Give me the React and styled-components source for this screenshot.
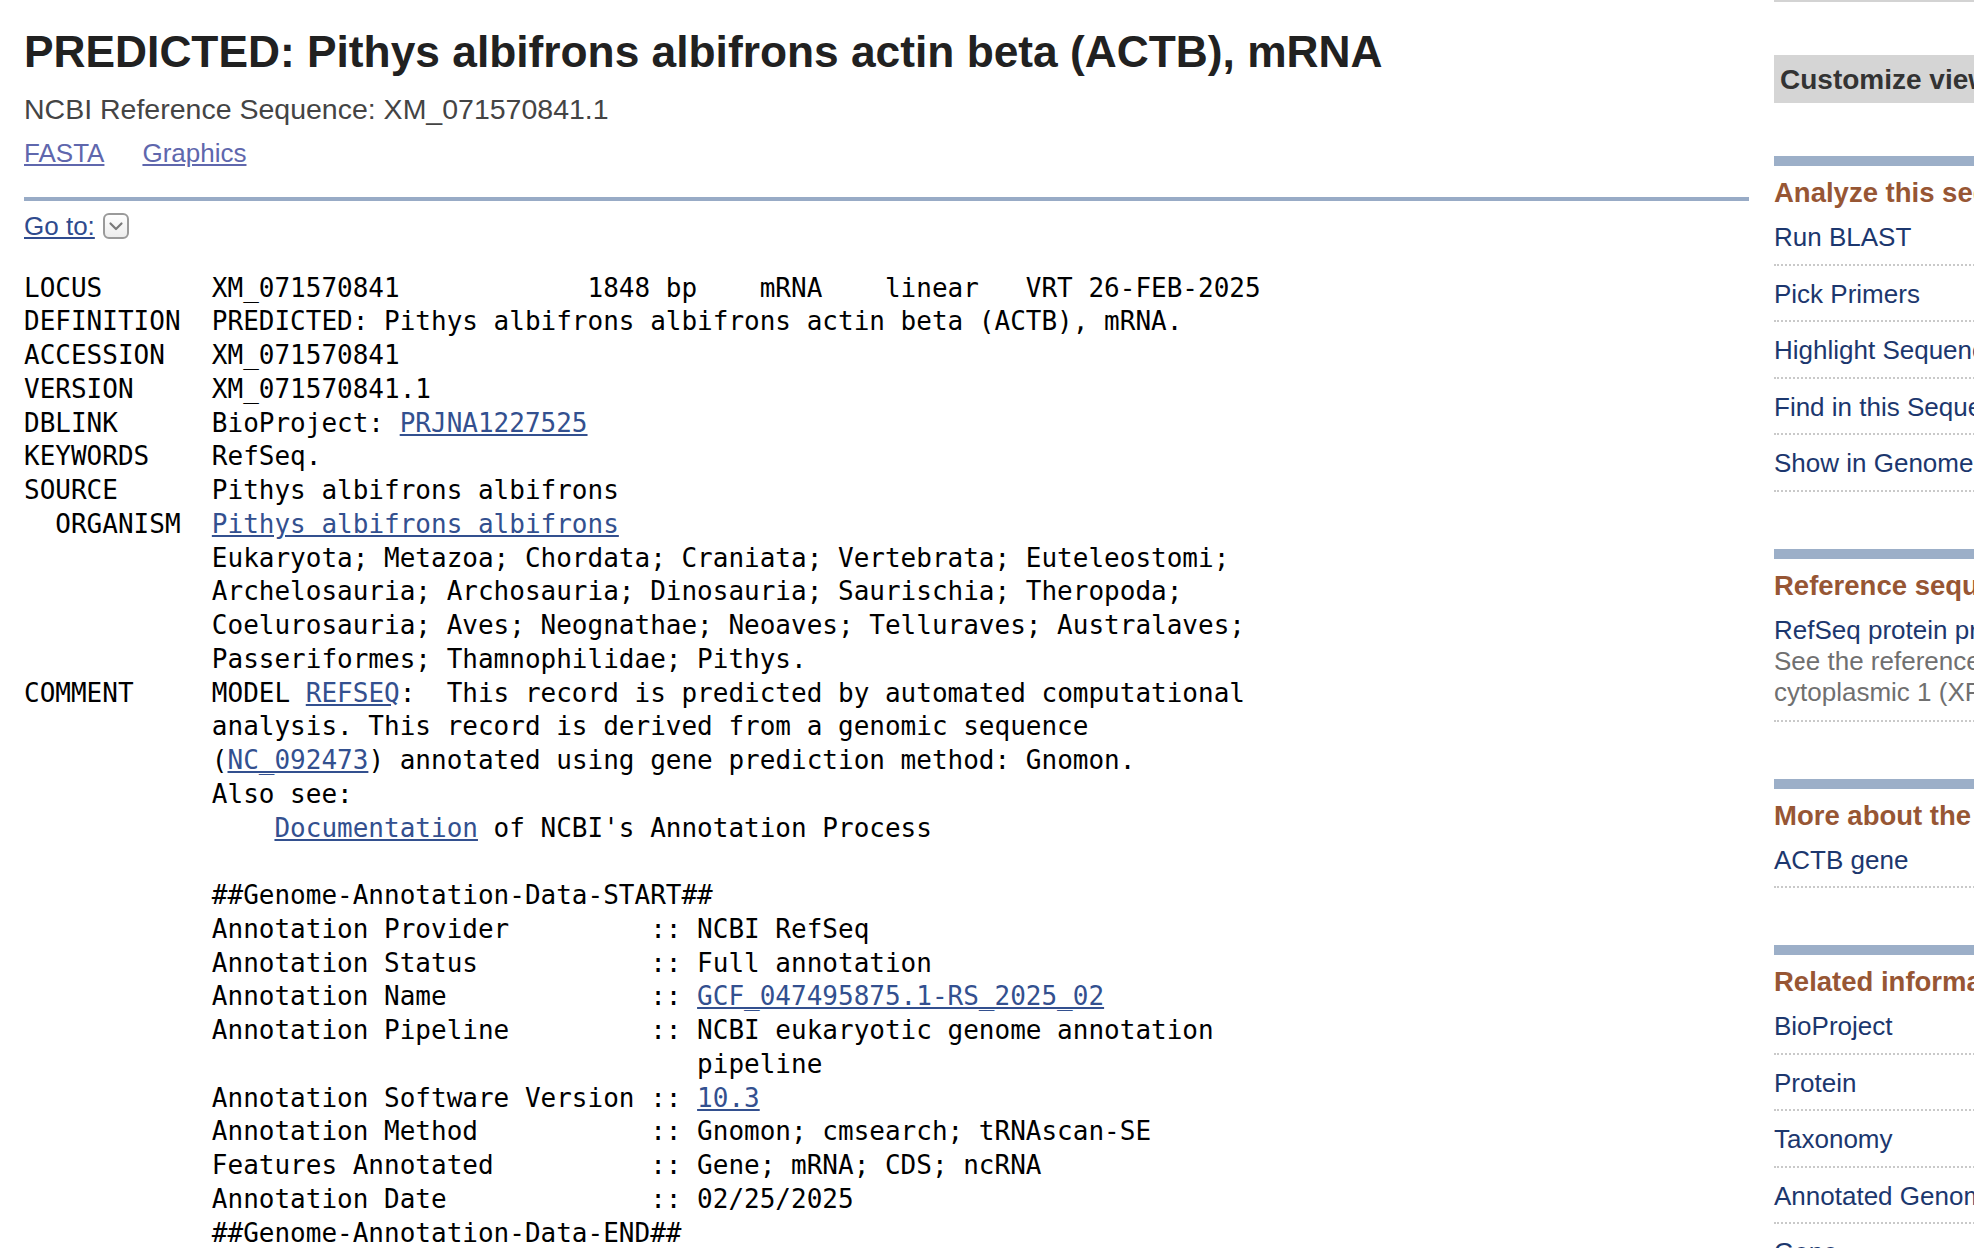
import styled, { createGlobalStyle } from "styled-components";

const GlobalStyle = createGlobalStyle`
  html, body {
    margin: 0;
    padding: 0;
    background: #fff;
    overflow: hidden;
  }
  body {
    font-family: "Liberation Sans", Arial, Helvetica, sans-serif;
  }
`;

const Page = styled.div`
  display: flex;
  align-items: flex-start;
  width: 1974px;
  height: 1248px;
  overflow: hidden;
`;

const Main = styled.div`
  flex: 0 0 1725px;
  margin-left: 24px;
  padding-top: 27px;
`;

const Title = styled.h1`
  margin: 0;
  font-size: 44.3px;
  line-height: 50px;
  font-weight: 700;
  color: #212121;
`;

const SubTitle = styled.div`
  margin-top: 15px;
  font-size: 28.5px;
  line-height: 34px;
  color: #444;
`;

const LinkBar = styled.div`
  display: flex;
  gap: 38px;
  margin-top: 11px;
  font-size: 26px;
  line-height: 32px;
`;

const VisitedLink = styled.a`
  color: #5f67ad;
  text-decoration: underline;
  cursor: pointer;
`;

const Rule = styled.div`
  margin-top: 28px;
  height: 4px;
  background: #98abc6;
`;

const GoTo = styled.div`
  display: flex;
  align-items: center;
  gap: 8px;
  margin-top: 9px;
  font-size: 26px;
  line-height: 32px;
`;

const GoToLink = styled.a`
  color: #2f4b8e;
  text-decoration: underline;
`;

const Record = styled.pre`
  margin: 29.5px 0 0;
  font-family: "DejaVu Sans Mono", "Liberation Mono", monospace;
  font-size: 26px;
  line-height: 33.75px;
  color: #000;
`;

const SeqLink = styled.a`
  color: #33508f;
  text-decoration: underline;
`;

const Side = styled.div`
  flex: 0 0 620px;
  margin-left: 25px;
  border-top: 2px solid #d3d3d3;
`;

const Customize = styled.div`
  margin-top: 53px;
  height: 48px;
  padding-left: 6px;
  background: #d5d5d5;
  color: #333;
  font-size: 28px;
  font-weight: 700;
  line-height: 50px;
  white-space: nowrap;
`;

const Section = styled.div`
  margin-top: ${(p) => (p.$first ? 53 : 57)}px;
  border-top: 10px solid #9cafc8;
`;

const Heading = styled.h3`
  margin: 11px 0 0;
  font-size: 27.5px;
  line-height: 32px;
  font-weight: 700;
  color: #975634;
  white-space: nowrap;
`;

const List = styled.ul`
  list-style: none;
  margin: 0;
  padding: 0;
`;

const Item = styled.li`
  padding: 12px 0 ${(p) => (p.$desc ? 12 : 10.5)}px;
  border-bottom: 2px dotted #c9c9c9;
  font-size: 26px;
  line-height: 32px;
  white-space: nowrap;
`;

const ItemLink = styled.a`
  color: #1c376e;
  text-decoration: none;
`;

const Desc = styled.div`
  color: #707070;
  line-height: 31px;
`;

function DropIcon() {
  return (
    <svg width="26" height="26" viewBox="0 0 26 26">
      <defs>
        <linearGradient id="dd" x1="0" y1="0" x2="0" y2="1">
          <stop offset="0" stopColor="#ffffff" />
          <stop offset="1" stopColor="#ececec" />
        </linearGradient>
      </defs>
      <rect x="1" y="1" width="24" height="24" rx="5" fill="url(#dd)" stroke="#9a9a9a" strokeWidth="2" />
      <path d="M7.5 10.5 L13 16 L18.5 10.5" fill="none" stroke="#7a7a7a" strokeWidth="2.2" strokeLinecap="round" strokeLinejoin="round" />
    </svg>
  );
}

const annotation = [
  ["Annotation Provider", "NCBI RefSeq"],
  ["Annotation Status", "Full annotation"],
  ["Annotation Name", <SeqLink key="n">GCF_047495875.1-RS_2025_02</SeqLink>],
  ["Annotation Pipeline", "NCBI eukaryotic genome annotation\n" + " ".repeat(43) + "pipeline"],
  ["Annotation Software Version", <SeqLink key="v">10.3</SeqLink>],
  ["Annotation Method", "Gnomon; cmsearch; tRNAscan-SE"],
  ["Features Annotated", "Gene; mRNA; CDS; ncRNA"],
  ["Annotation Date", "02/25/2025"],
];

const pad = " ".repeat(12);

const sections = [
  {
    title: "Analyze this sequence",
    items: [
      { label: "Run BLAST" },
      { label: "Pick Primers" },
      { label: "Highlight Sequence Features" },
      { label: "Find in this Sequence" },
      { label: "Show in Genome Data Viewer" },
    ],
  },
  {
    title: "Reference sequence information",
    items: [
      {
        label: "RefSeq protein product",
        desc: [
          "See the reference protein sequence for actin,",
          "cytoplasmic 1 (XP_071426942.1)",
        ],
      },
    ],
  },
  {
    title: "More about the ACTB gene",
    items: [{ label: "ACTB gene" }],
  },
  {
    title: "Related information",
    items: [
      { label: "BioProject" },
      { label: "Protein" },
      { label: "Taxonomy" },
      { label: "Annotated Genomes" },
      { label: "Gene" },
      { label: "Full text in PMC" },
    ],
  },
];

function GenBankRecord() {
  return (
    <Record>
      {"LOCUS       XM_071570841            1848 bp    mRNA    linear   VRT 26-FEB-2025\n"}
      {"DEFINITION  PREDICTED: Pithys albifrons albifrons actin beta (ACTB), mRNA.\n"}
      {"ACCESSION   XM_071570841\n"}
      {"VERSION     XM_071570841.1\n"}
      {"DBLINK      BioProject: "}
      <SeqLink>PRJNA1227525</SeqLink>
      {"\n"}
      {"KEYWORDS    RefSeq.\n"}
      {"SOURCE      Pithys albifrons albifrons\n"}
      {"  ORGANISM  "}
      <SeqLink>Pithys albifrons albifrons</SeqLink>
      {"\n"}
      {pad + "Eukaryota; Metazoa; Chordata; Craniata; Vertebrata; Euteleostomi;\n"}
      {pad + "Archelosauria; Archosauria; Dinosauria; Saurischia; Theropoda;\n"}
      {pad + "Coelurosauria; Aves; Neognathae; Neoaves; Telluraves; Australaves;\n"}
      {pad + "Passeriformes; Thamnophilidae; Pithys.\n"}
      {"COMMENT     MODEL "}
      <SeqLink>REFSEQ</SeqLink>
      {":  This record is predicted by automated computational\n"}
      {pad + "analysis. This record is derived from a genomic sequence\n"}
      {pad + "("}
      <SeqLink>NC_092473</SeqLink>
      {") annotated using gene prediction method: Gnomon.\n"}
      {pad + "Also see:\n"}
      {pad + "    "}
      <SeqLink>Documentation</SeqLink>
      {" of NCBI's Annotation Process\n"}
      {pad + "\n"}
      {pad + "##Genome-Annotation-Data-START##\n"}
      {annotation.map(([label, value]) => (
        <span key={label}>
          {pad + label.padEnd(28) + ":: "}
          {value}
          {"\n"}
        </span>
      ))}
      {pad + "##Genome-Annotation-Data-END##\n"}
      {"FEATURES             Location/Qualifiers\n"}
    </Record>
  );
}

export default function App() {
  return (
    <>
      <GlobalStyle />
      <Page>
        <Main>
          <Title>PREDICTED: Pithys albifrons albifrons actin beta (ACTB), mRNA</Title>
          <SubTitle>NCBI Reference Sequence: XM_071570841.1</SubTitle>
          <LinkBar>
            <VisitedLink>FASTA</VisitedLink>
            <VisitedLink>Graphics</VisitedLink>
          </LinkBar>
          <Rule />
          <GoTo>
            <GoToLink>Go to:</GoToLink>
            <DropIcon />
          </GoTo>
          <GenBankRecord />
        </Main>

        <Side>
          <Customize>Customize view</Customize>
          {sections.map((section, i) => (
            <Section key={section.title} $first={i === 0}>
              <Heading>{section.title}</Heading>
              <List>
                {section.items.map((item) => (
                  <Item key={item.label} $desc={!!item.desc}>
                    <ItemLink>{item.label}</ItemLink>
                    {item.desc && item.desc.map((line) => <Desc key={line}>{line}</Desc>)}
                  </Item>
                ))}
              </List>
            </Section>
          ))}
        </Side>
      </Page>
    </>
  );
}
